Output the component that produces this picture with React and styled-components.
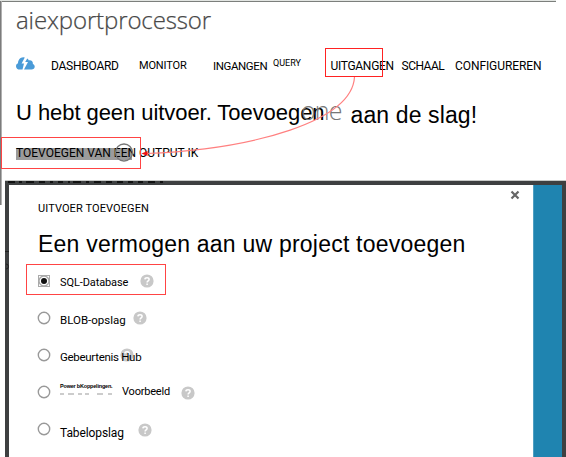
import React from 'react';
import styled, { createGlobalStyle } from 'styled-components';

const Global = createGlobalStyle`
  * { box-sizing: border-box; }
  body { margin: 0; background: #fff; overflow: hidden; }
`;

const Page = styled.div`
  width: 566px;
  height: 457px;
  display: flex;
  flex-direction: column;
  position: relative;
  overflow: hidden;
  background: #fff;
  color: #000;
`;

const Header = styled.header`
  height: 181px;
  display: flex;
  flex-direction: column;
  align-items: flex-start;
  padding: 5px 0 0 16px;
`;

const TopRule = styled.div`
  position: absolute;
  top: 0;
  left: 0;
  width: 556px;
  height: 2px;
  background: linear-gradient(#e2e5e2 50%, #7c7f7c 50%);
`;

const SideRule = styled.div`
  position: absolute;
  top: 1px;
  left: 0;
  width: 2px;
  height: 204px;
  background: linear-gradient(90deg, #7c7c7c 50%, #b0b0b0 50%);
`;

const ProjectName = styled.h1`
  margin: 0;
  font: 300 24px/30px 'Open Sans', sans-serif;
  letter-spacing: -0.12px;
  color: #444;
  -webkit-text-stroke: 0.25px #555;
`;

const Nav = styled.nav`
  display: flex;
  align-items: flex-start;
  margin-top: 22px;
  height: 17px;
`;

const Caption = styled.span`
  font: ${p => p.$size || 12}px/16px Roboto, sans-serif;
  letter-spacing: ${p => p.$track || 0}px;
  white-space: nowrap;
`;

const NavItem = styled(Caption).attrs({ as: 'a' })`
  width: ${p => p.$slot}px;
  flex: none;
  margin-top: ${p => p.$drop || 1}px;
`;

const NavIcon = styled.svg`
  flex: none;
  margin-right: 16px;
`;

const Message = styled.div`
  display: flex;
  margin-top: 25px;
  height: 31px;
  position: relative;
`;

const Heading = styled.h2`
  margin: ${p => p.$drop || 0}px ${p => p.$gap || 0}px 0 0;
  font: 400 ${p => p.$size}px/28px 'Liberation Sans', Arial, sans-serif;
  letter-spacing: ${p => p.$track}px;
  white-space: nowrap;
`;

const Ghost = styled.span`
  position: absolute;
  left: 285px;
  top: -4px;
  font: 300 25px/30px 'Open Sans', sans-serif;
  letter-spacing: -0.8px;
  color: #777;
`;

const Action = styled.div`
  display: flex;
  margin-top: 18px;
  height: 12px;
  line-height: 12px;
  width: 184px;
  background: linear-gradient(90deg, #9b9b9b 116px, transparent 116px);
`;

const ActionText = styled(Caption)`
  line-height: 11px;
`;

const Marks = styled.svg`
  position: absolute;
  inset: 0;
  pointer-events: none;
`;

const Dialog = styled.section`
  height: 276px;
  margin-left: 5px;
  display: flex;
  position: relative;
  border: solid #3e4041;
  border-width: 4px 4px 0 4px;
  box-shadow: 0 -1px 0 #c8cac8;
`;

const DialogBody = styled.div`
  flex: 1;
  display: flex;
  flex-direction: column;
  align-items: flex-start;
  padding: 16px 0 0 28px;
  background: #fff;
`;

const DialogRail = styled.aside`
  width: 29px;
  background: #1f84b0;
  border-left: 1px solid #4f9fc2;
`;

const DialogTitle = styled(Caption)`
  height: 16px;
  padding-left: 1px;
`;

const DialogHeading = styled(Heading)`
  height: 28px;
  margin-top: 13px;
  padding-left: 1px;
`;

const Options = styled.ul`
  list-style: none;
  margin: 5px 0 0;
  padding: 0;
  position: relative;
  z-index: 0;
`;

const Option = styled.li`
  display: flex;
  align-items: flex-start;
  height: 37px;
  padding-top: 11px;
`;

const OptionText = styled(Caption)`
  margin: ${p => p.$drop}px ${p => p.$gap || 0}px 0 0;
`;

const Tiny = styled.span`
  position: relative;
  width: 62px;
  margin-top: -3px;
  font: 700 5.5px/8px 'Liberation Sans', Arial, sans-serif;
  letter-spacing: -0.2px;
  white-space: nowrap;
`;

const Remnant = styled.svg`
  position: absolute;
  left: 0;
  top: 11px;
`;

const RadioMark = styled.svg`
  flex: none;
  margin-right: 9px;
`;

const HelpMark = styled.svg`
  flex: none;
  position: relative;
  z-index: -1;
  margin-top: ${p => p.$drop || 0}px;
  margin-left: ${p => p.$pull || 0}px;
`;

function Radio({ checked }) {
  return (
    <RadioMark width="14" height="14" viewBox="0 0 14 14" fill="none">
      {checked && <rect x="1.5" y="1.5" width="11" height="11" stroke="#555" strokeDasharray="1 1" />}
      <circle cx="7" cy="7" r={checked ? 5 : 5.7} stroke={checked ? '#aaa' : '#999'} strokeWidth="1.4" />
      {checked && <circle cx="7" cy="7" r="3" fill="#111" />}
    </RadioMark>
  );
}

function Help({ drop, pull }) {
  return (
    <HelpMark $drop={drop} $pull={pull} width="14" height="14" viewBox="0 0 14 14">
      <circle cx="7" cy="7" r="6.6" fill="#c8c8c8" />
      <path d="M4.9 5.4C5 3.2 9.1 3.2 9.1 5.4C9.1 6.8 7.1 6.8 7.1 8.5M7.1 9.6v1.5" fill="none" stroke="#fff" strokeWidth="1.5" />
    </HelpMark>
  );
}

function CloudIcon() {
  return (
    <NavIcon width="19" height="14" viewBox="0 0 19 14">
      <path
        fill="#4a9bd8"
        d="M4 12.6C1.500 12.600 0 11.200 0 9.200C0 7.700 .8 6.600 2 6.200C2 2.800 4.200 .3 7.200 .2L8.800 .4L5.600 6.600H8L6.500 12.600ZM8 12.600L12 5H9.200L11.200 1.400C12.200 2 12.600 2.700 12.900 3.400C15.300 2.900 17.200 4.500 16.900 6.900C18.200 7.500 18.800 8.600 18.700 9.800C18.600 11.500 17.300 12.600 15.600 12.600Z"
      />
    </NavIcon>
  );
}

export default function App() {
  return (
    <>
      <Global />
      <Page>
        <TopRule />
        <SideRule />
        <Header>
          <ProjectName>aiexportprocessor</ProjectName>
          <Nav>
            <CloudIcon />
            <NavItem $slot={88} $track={-0.25}>DASHBOARD</NavItem>
            <NavItem $slot={74} $size={11} $track={-0.15}>MONITOR</NavItem>
            <NavItem $slot={60} $size={11.5} $track={-0.4}>INGANGEN</NavItem>
            <NavItem $slot={57.5} $size={9} $drop={-2}>QUERY</NavItem>
            <NavItem $slot={71} $track={-0.3}>UITGANGEN</NavItem>
            <NavItem $slot={53.5} $track={-0.5}>SCHAAL</NavItem>
            <NavItem $slot={90} $track={-0.08}>CONFIGUREREN</NavItem>
          </Nav>
          <Message>
            <Ghost>one</Ghost>
            <Heading $size={22} $track={-0.06} $gap={26}>U hebt geen uitvoer. Toevoegen</Heading>
            <Heading $size={23} $track={0.12} $drop={2}>aan de slag!</Heading>
          </Message>
          <Action>
            <ActionText>TOEVOEGEN VAN EEN OUTPUT IK</ActionText>
          </Action>
        </Header>
        <Dialog>
          <DialogBody>
            <DialogTitle $size={11} $track={0.1}>UITVOER TOEVOEGEN</DialogTitle>
            <DialogHeading $size={23} $track={0.22}>Een vermogen aan uw project toevoegen</DialogHeading>
            <Options>
              <Option>
                <Radio checked />
                <OptionText $size={11} $track={-0.1} $drop={1} $gap={12}>SQL-Database</OptionText>
                <Help />
              </Option>
              <Option>
                <Radio />
                <OptionText $size={11.5} $drop={1} $gap={7}>BLOB-opslag</OptionText>
                <Help />
              </Option>
              <Option>
                <Radio />
                <OptionText $size={11.5} $track={-0.3} $drop={1}>Gebeurtenis Hub</OptionText>
                <Help pull={-21} />
              </Option>
              <Option>
                <Radio />
                <Tiny>
                  Power bKoppelingen.
                  <Remnant width="52" height="2">
                    <path d="M0 1h4m4 0h6m4 0h4m3 0h4m8 0h6m5 0h5" stroke="#999" />
                  </Remnant>
                </Tiny>
                <OptionText $size={11} $track={-0.2} $drop={-1} $gap={11}>Voorbeeld</OptionText>
                <Help drop={1} />
              </Option>
              <Option>
                <Radio />
                <OptionText $size={12} $track={-0.1} $drop={3} $gap={14}>Tabelopslag</OptionText>
                <Help drop={1} />
              </Option>
            </Options>
          </DialogBody>
          <DialogRail />
        </Dialog>
        <Marks width="566" height="457" fill="none">
          <rect x="325.500" y="48.500" width="57" height="28" stroke="#f22" />
          <rect x="1.500" y="137.500" width="139" height="31" stroke="#f44" />
          <rect x="26.500" y="264.500" width="139" height="30" stroke="#f44" />
          <path d="M354.500 77C352 121 255 149 146 153.500" stroke="#ff8080" strokeWidth="1.200" />
          <path d="M141.500 153.500l6-2.500v5z" fill="#e11" />
          <circle cx="124" cy="152.500" r="8.500" stroke="#777" strokeWidth="1.300" />
          <path d="M511.500 191.500l7 7m0-7l-7 7" stroke="#666" strokeWidth="2.200" />
          <path d="M8 182h7m4 0h3m4 0h8m5 0h6m5 0h3m5 0h5m5 0h2m3 0h8m5 0h3m5 0h7m5 0h6m5 0h6m5 0h5m5 0h5m5 0h7m5 0h3" stroke="#111" strokeWidth="2" />
          <path d="M5 251.500h4" stroke="#222" />
          <path d="M5 264a2.500 2.500 0 0 1 0 5" stroke="#222" transform="translate(1 0)" />
        </Marks>
      </Page>
    </>
  );
}
